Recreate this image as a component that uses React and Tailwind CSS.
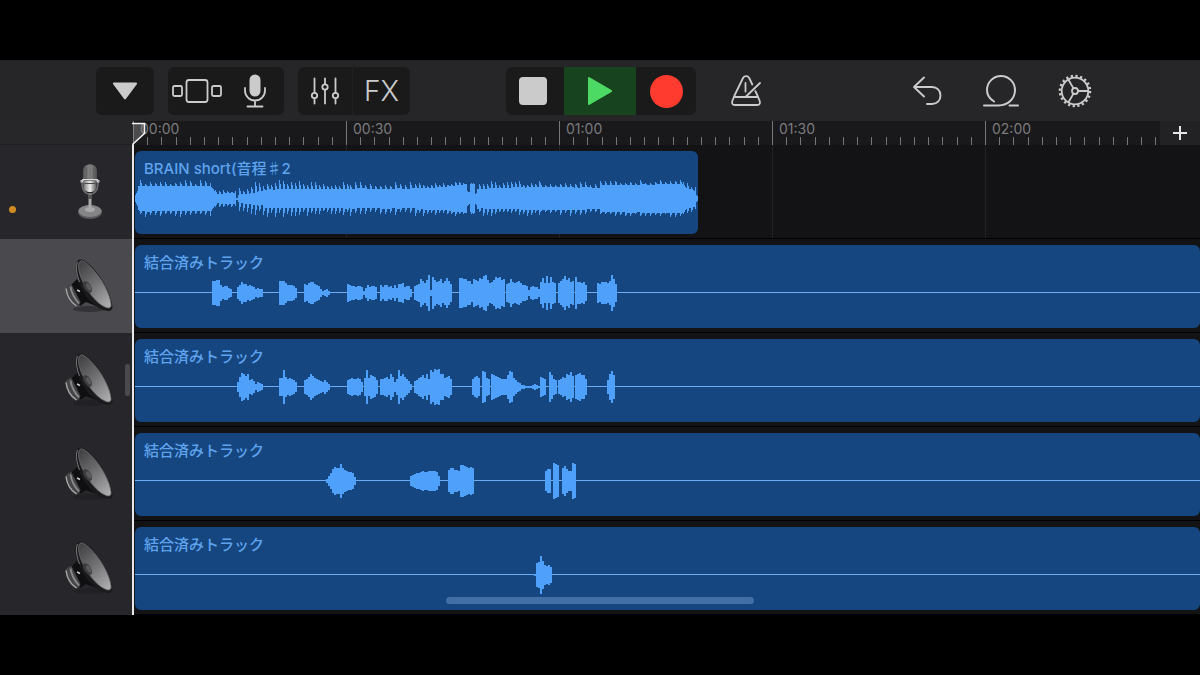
import React, { useState } from 'react';

const MARKS = ['00:00', '00:30', '01:00', '01:30', '02:00'];
const MID = 19.5;

// deterministic noise in 0..1
const noise = (n) => {
    const v = Math.sin(n * 12.9898) * 43758.5453;
    return v - Math.floor(v);
};

// [from, to, core start, core end, peak start, peak end, spike period]
const songParts = [
    [0, 4, 3, 12, 5, 15, 3],
    [4, 76, 12, 12, 19, 18, 5],
    [76, 80, 12, 5, 12, 7, 3],
    [80, 101, 4, 5, 9, 10, 4],
    [101, 103, 1, 1, 1, 1, 3],
    [103, 130, 3, 6, 14, 19, 4],
    [130, 215, 8, 9, 19, 17, 4],
    [215, 280, 9, 9, 18, 17, 5],
    [280, 313, 10, 11, 18, 16, 4],
    [313, 332, 12, 14, 17, 19, 4],
    [332, 335, 6, 5, 8, 6, 2],
    [335, 340, 13, 14, 17, 16, 2],
    [340, 342, 4, 6, 6, 8, 2],
    [342, 405, 9, 11, 18, 18, 4],
    [405, 465, 11, 10, 18, 17, 5],
    [465, 548, 13, 14, 18, 19, 5],
    [548, 561, 11, 7, 17, 13, 4],
    [561, 563, 3, 1, 4, 2, 2],
];

const songWave = () => {
    let d = '';
    songParts.forEach(([from, to, c0, c1, p0, p1, period]) => {
        for (let x = from; x < to; x += 1) {
            const t = (x - from) / (to - from);
            const core = c0 + (c1 - c0) * t;
            const peak = p0 + (p1 - p0) * t;
            const place = x % period;
            const reach = place === 0 ? 1 : place === 1 ? 0.6 : 0.15;
            const beat = Math.floor(x / period);
            const up = core + (peak - core) * reach * (0.35 + 0.65 * noise(beat));
            const down = core + (peak - core) * reach * (0.35 + 0.65 * noise(beat + 300));
            d += `M${x} ${(MID - up).toFixed(1)}h1V${(MID + down).toFixed(1)}h-1z`;
        }
    });
    return d;
};

// every value is the height of a two pixel column
const burstWave = (bursts) => {
    let d = '';
    bursts.forEach(([start, amps]) => {
        amps.forEach((a, i) => {
            const x = start + i * 2;
            d += `M${x} ${MID - a}h2V${MID + a}h-2z`;
        });
    });
    return d;
};

const tracks = [
    { id: 1, kind: 'mic', name: 'BRAIN short(音程♯2', wave: songWave(), short: true },
    {
        id: 2, kind: 'speaker', name: '結合済みトラック',
        wave: burstWave([
            [77, [12, 12, 13, 13, 8, 6, 7, 7, 5, 4]],
            [102, [6, 8, 11, 9, 9, 7, 8, 7, 6, 4, 5, 4, 4]],
            [144, [12, 12, 12, 10, 8, 8, 8, 7, 5]],
            [169, [9, 8, 10, 11, 11, 9, 8, 7, 4, 2, 3, 4, 2]],
            [212, [9, 8, 7, 7, 6, 7, 7, 6, 2, 5, 8, 6, 7, 7, 6]],
            [245, [8, 6, 8, 8, 6, 7, 5, 8, 5, 9, 9, 10, 6, 7, 7, 4]],
            [279, [7, 8, 9, 14, 12, 10, 13, 18, 3, 16, 13, 11, 12, 14, 10, 12, 15, 12, 9]],
            [324, [15, 15, 14, 14, 12, 12, 9, 14, 13, 12, 15, 14, 17, 18, 13, 10, 11, 13, 16, 15, 16, 13, 14]],
            [371, [9, 10, 14, 11, 10, 11, 12, 10, 8, 8, 7, 3, 6, 7, 6, 6, 4]],
            [405, [11, 15, 10, 17, 10, 16, 11, 10]],
            [423, [10, 12, 14, 17, 13, 15, 11, 12]],
            [440, [16, 11, 11, 10, 11, 8]],
            [462, [10, 9, 11, 11, 11, 10, 12, 18, 14, 9]],
        ]),
    },
    {
        id: 3, kind: 'speaker', name: '結合済みトラック',
        wave: burstWave([
            [102, [5, 10, 14, 13, 11, 13, 7, 8, 6, 3, 5, 4, 3]],
            [144, [9, 9, 17, 10, 8, 9, 8, 7, 5]],
            [169, [7, 8, 10, 13, 11, 9, 8, 7, 6, 5, 7, 5, 3]],
            [212, [7, 8, 9, 8, 8, 9, 8, 5]],
            [229, [9, 17, 9, 12, 11, 10, 7]],
            [245, [8, 8, 9, 10, 8, 13, 10, 5, 8, 17, 11, 13, 10, 8, 6, 3]],
            [279, [6, 7, 9, 10, 12, 9, 13, 8]],
            [295, [17, 15, 18, 17, 18, 13, 13, 9, 10, 11, 8]],
            [337, [8, 10, 11, 9]],
            [347, [16, 15, 9, 8]],
            [356, [13, 12, 11, 10, 9, 8, 8, 8, 12, 16, 15, 9, 7, 5, 4, 2, 2, 1]],
            [391, [1, 1, 1, 2, 3, 2, 1]],
            [405, [10, 9, 8]],
            [414, [15, 12, 8, 7]],
            [423, [7, 8, 10, 9, 13, 12, 15, 11]],
            [440, [12, 13, 14, 12, 12, 8]],
            [472, [7, 13, 16, 12]],
        ]),
    },
    {
        id: 4, kind: 'speaker', name: '結合済みトラック',
        wave: burstWave([
            [191, [2, 5, 8, 12, 14, 13, 13, 17, 13, 11, 10, 9, 9, 8, 4]],
            [275, [5, 6, 7, 8, 8, 9, 10, 9, 9, 10, 10, 10, 10, 9, 5]],
            [313, [11, 13, 13, 11, 11, 10, 16, 16, 15, 14, 13, 14, 13]],
            [410, [10, 12, 12]],
            [418, [18, 17, 16]],
            [427, [13, 15, 12, 10, 10, 18, 17]],
        ]),
    },
    {
        id: 5, kind: 'speaker', name: '結合済みトラック',
        wave: burstWave([[399, [1, 12, 13, 19, 14, 10, 9, 10, 8]]]),
    },
];

const MicPicture = () => (
    <svg width="52" height="56" viewBox="0 0 52 56" aria-hidden="true">
        <defs>
            <linearGradient id="micHead" x1="0" x2="1" y1="0" y2="0">
                <stop offset="0" stopColor="#555" />
                <stop offset="0.5" stopColor="#8a8a8a" />
                <stop offset="1" stopColor="#4c4c4c" />
            </linearGradient>
            <linearGradient id="micBody" x1="0" x2="1" y1="0" y2="0">
                <stop offset="0" stopColor="#777" />
                <stop offset="0.5" stopColor="#eee" />
                <stop offset="1" stopColor="#555" />
            </linearGradient>
        </defs>
        <ellipse cx="27" cy="48" rx="12" ry="7" fill="#5a5a5c" />
        <ellipse cx="27" cy="47" rx="11.5" ry="6" fill="#858587" />
        <ellipse cx="27" cy="45.5" rx="5" ry="2.5" fill="#a8a8aa" />
        <rect x="25.5" y="29" width="3" height="17" fill="#a9a9ab" />
        <rect x="25" y="31" width="4" height="4" fill="#555" />
        <path d="M19 18c0 8 3 12 8 12s8-4 8-12" fill="none" stroke="#6e6e70" strokeWidth="1.5" />
        <path d="M20.500 17h13v6c0 3-3 5-6.500 5s-6.500-2-6.500-5z" fill="url(#micBody)" />
        <path d="M20 7c0-4 2.500-6.500 7-6.500S34 3 34 7v9H20z" fill="url(#micHead)" />
        <path d="M23.500 3v13M27 1.500v14.500M30.500 3v13" stroke="#5a5a5c" strokeWidth="0.600" />
        <rect x="19" y="15" width="16" height="1.500" fill="#d9d9da" />
        <rect x="17.500" y="16" width="3" height="2.500" fill="#c4c4c6" />
        <rect x="33.500" y="16" width="3" height="2.500" fill="#c4c4c6" />
        <path d="M21.500 19.500h11" stroke="#4a4a4a" />
    </svg>
);

const SpeakerPicture = () => (
    <svg width="52" height="54" viewBox="0 0 52 54" aria-hidden="true">
        <defs>
            <linearGradient id="cone" x1="0.200" x2="0.800" y1="0" y2="1">
                <stop offset="0" stopColor="#444446" />
                <stop offset="0.450" stopColor="#6d6d6f" />
                <stop offset="1" stopColor="#aaaaac" />
            </linearGradient>
        </defs>
        <ellipse cx="26" cy="50" rx="16" ry="3" fill="#1c1c1f" opacity="0.500" />
        <path d="M14 20 7 27l10 20 6-4 10 4z" fill="#0f0f11" />
        <path d="M2.500 29.500c0-2 4-4.500 6-4.500l9 18c-1 3-2 4-4 4.500C8 46 3 38 2.500 29.500z" fill="#464648" />
        <path d="M3 29.500C4 37 8 43.500 13.500 47" fill="none" stroke="#a8a8aa" strokeWidth="1.400" />
        <path d="M7.500 27.500c1 7 4 12 8.500 17" fill="none" stroke="#8a8a8c" strokeWidth="1.800" />
        <path d="M14 31l3 1.500" stroke="#cfcfd1" strokeWidth="1.400" />
        <path d="M15.500 1C11.500 3 12 14 16.500 25S29 46 39 50.500c5 2 10 2.500 10.500-2C49 38 41 21 30.500 9.500 24 2.500 19-.5 15.500 1z" fill="#1a1a1d" />
        <path d="M17.500 2c-3.500 2.500-2 12 2.500 21s13 21 22 25c4 1.800 6.500 1 6-3C47 35 39 20 29.500 10 24.500 4.500 19.500 1 17.500 2z" fill="url(#cone)" stroke="#6b6b6d" strokeWidth="0.800" />
        <path d="M14.500 3c-2 5-1 12 2 20" fill="none" stroke="#8e8e90" strokeWidth="0.800" />
        <ellipse cx="24.500" cy="28" rx="3.500" ry="6.500" transform="rotate(-32 24.500 28)" fill="#3c3c3e" />
        <ellipse cx="25.800" cy="28" rx="2" ry="4" transform="rotate(-32 25.800 28)" fill="#59595b" />
    </svg>
);

const BrowserIcon = () => (
    <svg width="52" height="26" viewBox="0 0 52 26" fill="none" stroke="currentColor" strokeWidth="1.800" aria-hidden="true">
        <rect x="2" y="8" width="9" height="10" rx="1.500" />
        <rect x="15.500" y="2" width="21" height="22" rx="2.500" />
        <rect x="41" y="8" width="9" height="10" rx="1.500" />
    </svg>
);

const MicIcon = () => (
    <svg width="24" height="34" viewBox="0 0 24 34" fill="none" stroke="currentColor" strokeWidth="1.800" strokeLinecap="round" aria-hidden="true">
        <rect x="6.500" y="0.500" width="11" height="22" rx="5.500" fill="currentColor" stroke="none" />
        <path d="M2 14v2.500a10 10 0 0 0 20 0V14M12 26.500V32M4.500 32.500h15" />
    </svg>
);

const MixerIcon = () => (
    <svg width="30" height="28" viewBox="0 0 30 28" fill="none" stroke="currentColor" strokeWidth="1.800" strokeLinecap="round" aria-hidden="true">
        <path d="M4.500 1.500v14M4.500 22v4.500M15 1.500V7M15 13v13.500M25.500 1.500v14M25.500 22v4.500" />
        <circle cx="4.500" cy="18.500" r="2.700" />
        <circle cx="15" cy="10" r="2.700" />
        <circle cx="25.500" cy="18.500" r="2.700" />
    </svg>
);

const MetronomeIcon = () => (
    <svg width="32" height="32" viewBox="0 0 32 32" fill="none" stroke="currentColor" strokeWidth="1.800" strokeLinecap="round" strokeLinejoin="round" aria-hidden="true">
        <path d="M22.300 9.500 19.200 3c-1.400-2.600-4.800-2.600-6.200 0L4.500 20.500 2.300 26c-.8 2.300.2 4 2.400 4h22.600c2.200 0 3.200-1.700 2.400-4l-2-5-2.400-5" />
        <path d="M4.500 22h23M15.500 8v8.500M15.500 22 30 8" />
    </svg>
);

const UndoIcon = () => (
    <svg width="32" height="32" viewBox="0 0 32 32" fill="none" stroke="currentColor" strokeWidth="1.900" strokeLinecap="round" strokeLinejoin="round" aria-hidden="true">
        <path d="M13 2.500 3 12l10 9.500M3 12h18c5 0 8.500 3.600 8.500 8.500S26 29 21 29h-5" />
    </svg>
);

const LoopIcon = () => (
    <svg width="38" height="34" viewBox="0 0 38 34" fill="none" stroke="currentColor" strokeWidth="2" strokeLinecap="round" aria-hidden="true">
        <path d="M2 31.500h14.500c9.500-.5 16.500-6.500 16.500-15.500a14 14 0 1 0-28 0c0 4.700 2.800 8.800 7 11.500M27.500 31.500h8.500" />
    </svg>
);

const GearIcon = () => (
    <svg width="34" height="34" viewBox="-17 -17 34 34" fill="none" stroke="currentColor" strokeWidth="1.800" aria-hidden="true">
        <circle r="13.300" />
        <circle r="15" strokeWidth="2.600" strokeDasharray="2.200 2.512" />
        <circle r="3" />
        <path d="M3 0h10.300M-1.500 2.600l-5.200 8.900M-1.500-2.600l-5.200-8.900" />
    </svg>
);

const ToolButton = ({ label, className = '', children }) => (
    <button type="button" aria-label={label} className={`flex h-12 items-center justify-center text-[#cbcbcb] ${className}`}>
        {children}
    </button>
);

const Toolbar = ({ playing, onPlay, onStop }) => (
    <div className="flex h-[61px] items-center border-t border-[#202022] bg-[#262628] pl-24 pr-[88px]">
        <div className="flex shrink-0 gap-[14px]">
            <div className="rounded-md bg-[#1a1a1b]">
                <ToolButton label="Menu" className="w-[58px]">
                    <svg width="26" height="18" viewBox="0 0 26 18" fill="currentColor" aria-hidden="true">
                        <path d="M2 0.500h22c1 0 1.400 1 .8 1.800L14 16.800c-.6.800-1.400.8-2 0L1.200 2.300C.6 1.500 1 .5 2 .5z" />
                    </svg>
                </ToolButton>
            </div>
            <div className="flex rounded-md bg-[#1a1a1b]">
                <ToolButton label="Browser" className="w-[58px]"><BrowserIcon /></ToolButton>
                <ToolButton label="Instrument" className="w-[58px]"><MicIcon /></ToolButton>
            </div>
            <div className="flex rounded-md bg-[#1a1a1b]">
                <ToolButton label="Track controls" className="w-[54px]"><MixerIcon /></ToolButton>
                <ToolButton label="Effects" className="w-[58px] border-l border-[#212122]">
                    <span className="text-[28px] font-light leading-none">FX</span>
                </ToolButton>
            </div>
        </div>

        <div className="ml-24 flex shrink-0 overflow-hidden rounded-md bg-[#1a1a1b]">
            <button type="button" aria-label="Stop" onClick={onStop} className="flex h-12 w-[58px] items-center justify-center pr-1">
                <span className="h-7 w-7 rounded-sm bg-[#cbcbcb]" />
            </button>
            <button type="button" aria-label="Play" aria-pressed={playing} onClick={onPlay} className={`flex h-12 w-[72px] items-center justify-center ${playing ? 'bg-[#17431e]' : ''}`}>
                <svg width="26" height="30" viewBox="0 0 26 30" aria-hidden="true">
                    <path d="M1 2c0-1 .8-1.300 1.500-.8L24.500 14c.8.500.8 1.500 0 2L2.500 28.800C1.800 29.300 1 29 1 28z" fill="#4cd964" />
                </svg>
            </button>
            <button type="button" aria-label="Record" className="flex h-12 w-[60px] items-center justify-center">
                <span className="h-[33px] w-[33px] rounded-full bg-[#ff3b30]" />
            </button>
        </div>

        <ToolButton label="Metronome" className="ml-5 w-[60px] shrink-0"><MetronomeIcon /></ToolButton>

        <div className="ml-auto flex shrink-0">
            <ToolButton label="Undo" className="w-[74px]"><UndoIcon /></ToolButton>
            <ToolButton label="Loop browser" className="w-[74px]"><LoopIcon /></ToolButton>
            <ToolButton label="Settings" className="w-[74px]"><GearIcon /></ToolButton>
        </div>
    </div>
);

const Ruler = () => (
    <div className="flex h-6">
        <div className="w-[133px] shrink-0 border-b border-[#202022] bg-[#272729]" />
        <div className="flex min-w-0 flex-1 overflow-hidden bg-[#19191b]">
            {MARKS.map((mark) => (
                <div key={mark} className="flex w-[213px] shrink-0 flex-col justify-between border-l border-[#77777a]">
                    <span className="h-4 pl-[6px] text-sm leading-4 text-[#7b7b7e]">{mark}</span>
                    <div className="-ml-px grid h-2 grid-cols-15">
                        {Array.from({ length: 15 }, (_, i) => (
                            <span key={i} className={i === 0 ? '' : 'border-l border-[#77777a]'} />
                        ))}
                    </div>
                </div>
            ))}
        </div>
        <button type="button" aria-label="Add section" className="flex w-10 shrink-0 items-center justify-center bg-[#222224]">
            <svg width="14" height="14" viewBox="0 0 14 14" stroke="#e6e6e6" strokeWidth="2" aria-hidden="true">
                <path d="M7 0v14M0 7h14" />
            </svg>
        </button>
    </div>
);

const TrackHeader = ({ track, selected, onSelect }) => (
    <button
        type="button"
        aria-label={track.name}
        onClick={onSelect}
        className={`flex h-[94px] w-[133px] shrink-0 items-center justify-end pr-[18px] ${selected ? 'bg-[#4a4a4e]' : 'bg-[#27272b]'}`}
    >
        {track.kind === 'mic' && <span className="mr-auto ml-[9px] mt-[34px] h-[7px] w-[7px] rounded-full bg-[#d08a22]" />}
        {track.kind === 'mic' ? <MicPicture /> : <SpeakerPicture />}
    </button>
);

const Lane = ({ track }) => (
    <div className="relative h-[94px] min-w-0 flex-1 overflow-hidden border-b border-black bg-[#131315]">
        {track.short && (
            <div className="absolute inset-0 flex">
                {MARKS.map((mark) => (
                    <span key={mark} className="w-[213px] shrink-0 border-l border-[#222224]" />
                ))}
            </div>
        )}
        <div className={`relative mt-[6px] ml-[2px] h-[83px] overflow-hidden rounded-md bg-[#15467f] pt-2 ${track.short ? 'w-[563px]' : ''}`}>
            <p className="truncate pl-[9px] text-[15px] font-medium leading-5 text-[#5fa3ee]">{track.name}</p>
            <svg className="block h-10 w-full" shapeRendering="crispEdges" aria-hidden="true">
                {!track.short && <rect x="0" y="19" width="100%" height="1" fill="#6bacf5" />}
                <path d={track.wave} fill="#4fa0fb" />
            </svg>
        </div>
    </div>
);

const App = () => {
    const [selected, setSelected] = useState(2);
    const [playing, setPlaying] = useState(true);

    return (
        <div className="min-h-screen bg-black py-[60px] font-['Inter','Noto_Sans_CJK_JP',sans-serif]">
            <Toolbar playing={playing} onPlay={() => setPlaying(true)} onStop={() => setPlaying(false)} />
            <div className="relative">
                <Ruler />
                {tracks.map((track) => (
                    <div key={track.id} className="flex">
                        <TrackHeader track={track} selected={selected === track.id} onSelect={() => setSelected(track.id)} />
                        <Lane track={track} />
                    </div>
                ))}

                {/* playhead */}
                <div className="pointer-events-none absolute inset-y-0 left-[132px] flex flex-col">
                    <svg width="14" height="24" viewBox="0 0 14 24" aria-hidden="true">
                        <path d="M1 2.500h11v10L1 23z" fill="#8a8a8c" fillOpacity="0.450" />
                        <path d="M0 2.500h12.500v10L1 23v2" fill="none" stroke="#f2f2f2" strokeWidth="1.600" />
                    </svg>
                    <span className="w-[2px] flex-1 bg-[#e8e8ea]" />
                </div>

                {/* scroll indicators */}
                <span className="absolute left-[125px] top-[243px] h-8 w-[5px] rounded-full bg-[#4a4a4e]" />
                <span className="absolute bottom-[11px] left-1/2 h-[7px] w-[308px] -translate-x-1/2 rounded-full bg-[#426fa6]" />
            </div>
        </div>
    );
};

export default App;
